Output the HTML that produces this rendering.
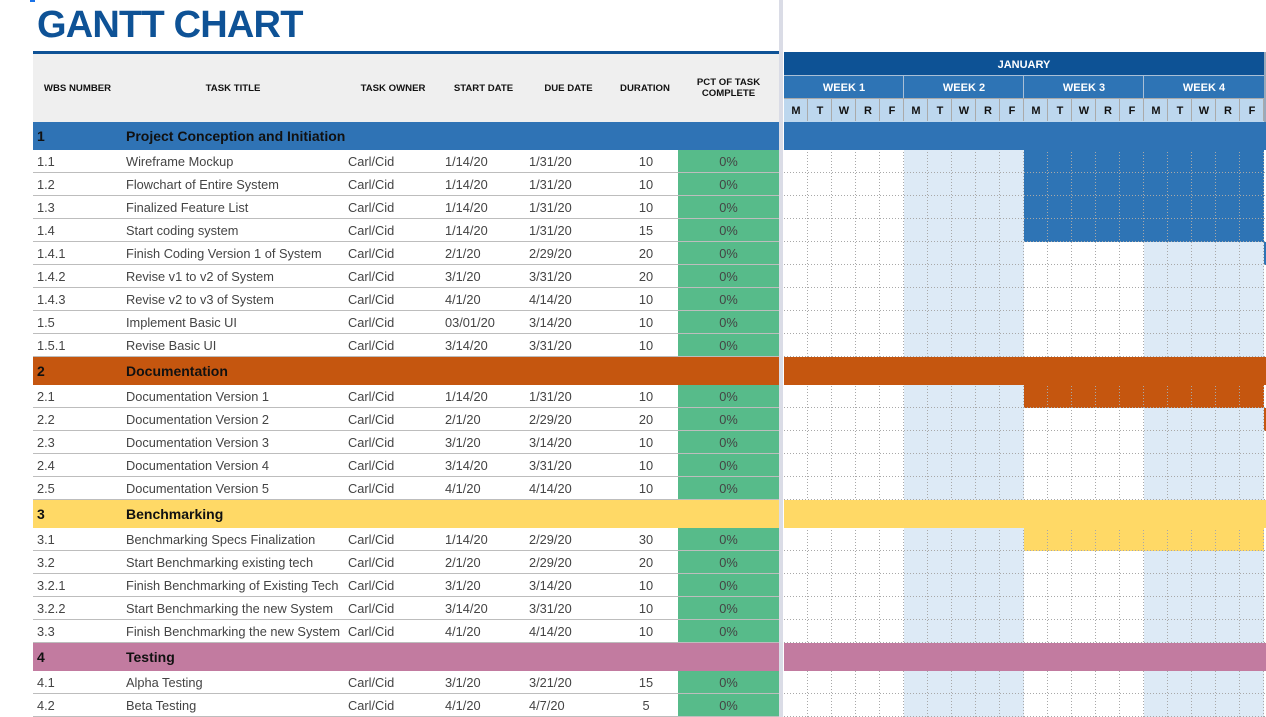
<!DOCTYPE html>
<html><head><meta charset="utf-8"><style>
*{margin:0;padding:0;box-sizing:border-box}
body{width:1266px;height:717px;overflow:hidden;background:#fff;font-family:"Liberation Sans",Arial,sans-serif;position:relative}
.title{position:absolute;left:37px;top:4px;font-size:38px;font-weight:bold;color:#0e5296;letter-spacing:-0.8px}
.mark{position:absolute;left:30px;top:0;width:5px;height:2px;background:#1a73e8}
.sep{position:absolute;left:779px;top:0;width:4px;height:717px;background:#dadce6}
.blueline{position:absolute;left:33px;top:51px;width:746px;height:3px;background:#0e5296}
.hdr{position:absolute;left:33px;top:54px;width:746px;height:68px;background:#efefef;display:flex;align-items:center;font-size:9.6px;font-weight:bold;color:#111}
.c{flex:none;text-align:center}
.w1{width:89px}.w2{width:222px}.w3{width:98px}.w4{width:83px}.w5{width:87px}.w6{width:66px}.w7{width:101px}
.rows{position:absolute;left:33px;top:122px;width:746px}
.r{display:flex;height:23px;border-bottom:1px solid #bdbdbd;font-size:12.8px;color:#444;align-items:center}
.r div{flex:none;white-space:nowrap}
.r .a{width:93px;padding-left:4px}
.r .b{width:222px}
.r .o{width:97px}
.r .s{width:84px}
.r .d{width:85px}
.r .du{width:64px;text-align:center;padding-left:0}
.r .p{width:101px;height:22px;line-height:23px;text-align:center;background:#57bb8a;margin-left:0}
.sec{display:flex;height:28px;align-items:center;font-size:14px;font-weight:bold;color:#111}
.sec .a{width:93px;padding-left:4px}
</style></head><body>
<div class="mark"></div>
<div class="title">GANTT CHART</div>
<div class="blueline"></div>
<div class="sep"></div>
<div class="hdr">
<div class="c w1">WBS NUMBER</div><div class="c w2">TASK TITLE</div><div class="c w3">TASK OWNER</div><div class="c w4">START DATE</div><div class="c w5">DUE DATE</div><div class="c w6">DURATION</div><div class="c w7">PCT OF TASK<br>COMPLETE</div>
</div>
<div class="rows">
<div class="sec" style="background:#2f73b5"><div class="a">1</div><div>Project Conception and Initiation</div></div>
<div class="r"><div class="a">1.1</div><div class="b">Wireframe Mockup</div><div class="o">Carl/Cid</div><div class="s">1/14/20</div><div class="d">1/31/20</div><div class="du">10</div><div class="p">0%</div></div>
<div class="r"><div class="a">1.2</div><div class="b">Flowchart of Entire System</div><div class="o">Carl/Cid</div><div class="s">1/14/20</div><div class="d">1/31/20</div><div class="du">10</div><div class="p">0%</div></div>
<div class="r"><div class="a">1.3</div><div class="b">Finalized Feature List</div><div class="o">Carl/Cid</div><div class="s">1/14/20</div><div class="d">1/31/20</div><div class="du">10</div><div class="p">0%</div></div>
<div class="r"><div class="a">1.4</div><div class="b">Start coding system</div><div class="o">Carl/Cid</div><div class="s">1/14/20</div><div class="d">1/31/20</div><div class="du">15</div><div class="p">0%</div></div>
<div class="r"><div class="a">1.4.1</div><div class="b">Finish Coding Version 1 of System</div><div class="o">Carl/Cid</div><div class="s">2/1/20</div><div class="d">2/29/20</div><div class="du">20</div><div class="p">0%</div></div>
<div class="r"><div class="a">1.4.2</div><div class="b">Revise v1 to v2 of System</div><div class="o">Carl/Cid</div><div class="s">3/1/20</div><div class="d">3/31/20</div><div class="du">20</div><div class="p">0%</div></div>
<div class="r"><div class="a">1.4.3</div><div class="b">Revise v2 to v3 of System</div><div class="o">Carl/Cid</div><div class="s">4/1/20</div><div class="d">4/14/20</div><div class="du">10</div><div class="p">0%</div></div>
<div class="r"><div class="a">1.5</div><div class="b">Implement Basic UI</div><div class="o">Carl/Cid</div><div class="s">03/01/20</div><div class="d">3/14/20</div><div class="du">10</div><div class="p">0%</div></div>
<div class="r"><div class="a">1.5.1</div><div class="b">Revise Basic UI</div><div class="o">Carl/Cid</div><div class="s">3/14/20</div><div class="d">3/31/20</div><div class="du">10</div><div class="p">0%</div></div>
<div class="sec" style="background:#c5560f"><div class="a">2</div><div>Documentation</div></div>
<div class="r"><div class="a">2.1</div><div class="b">Documentation Version 1</div><div class="o">Carl/Cid</div><div class="s">1/14/20</div><div class="d">1/31/20</div><div class="du">10</div><div class="p">0%</div></div>
<div class="r"><div class="a">2.2</div><div class="b">Documentation Version 2</div><div class="o">Carl/Cid</div><div class="s">2/1/20</div><div class="d">2/29/20</div><div class="du">20</div><div class="p">0%</div></div>
<div class="r"><div class="a">2.3</div><div class="b">Documentation Version 3</div><div class="o">Carl/Cid</div><div class="s">3/1/20</div><div class="d">3/14/20</div><div class="du">10</div><div class="p">0%</div></div>
<div class="r"><div class="a">2.4</div><div class="b">Documentation Version 4</div><div class="o">Carl/Cid</div><div class="s">3/14/20</div><div class="d">3/31/20</div><div class="du">10</div><div class="p">0%</div></div>
<div class="r"><div class="a">2.5</div><div class="b">Documentation Version 5</div><div class="o">Carl/Cid</div><div class="s">4/1/20</div><div class="d">4/14/20</div><div class="du">10</div><div class="p">0%</div></div>
<div class="sec" style="background:#ffd966"><div class="a">3</div><div>Benchmarking</div></div>
<div class="r"><div class="a">3.1</div><div class="b">Benchmarking Specs Finalization</div><div class="o">Carl/Cid</div><div class="s">1/14/20</div><div class="d">2/29/20</div><div class="du">30</div><div class="p">0%</div></div>
<div class="r"><div class="a">3.2</div><div class="b">Start Benchmarking existing tech</div><div class="o">Carl/Cid</div><div class="s">2/1/20</div><div class="d">2/29/20</div><div class="du">20</div><div class="p">0%</div></div>
<div class="r"><div class="a">3.2.1</div><div class="b">Finish Benchmarking of Existing Tech</div><div class="o">Carl/Cid</div><div class="s">3/1/20</div><div class="d">3/14/20</div><div class="du">10</div><div class="p">0%</div></div>
<div class="r"><div class="a">3.2.2</div><div class="b">Start Benchmarking the new System</div><div class="o">Carl/Cid</div><div class="s">3/14/20</div><div class="d">3/31/20</div><div class="du">10</div><div class="p">0%</div></div>
<div class="r"><div class="a">3.3</div><div class="b">Finish Benchmarking the new System</div><div class="o">Carl/Cid</div><div class="s">4/1/20</div><div class="d">4/14/20</div><div class="du">10</div><div class="p">0%</div></div>
<div class="sec" style="background:#c27ba0"><div class="a">4</div><div>Testing</div></div>
<div class="r"><div class="a">4.1</div><div class="b">Alpha Testing</div><div class="o">Carl/Cid</div><div class="s">3/1/20</div><div class="d">3/21/20</div><div class="du">15</div><div class="p">0%</div></div>
<div class="r"><div class="a">4.2</div><div class="b">Beta Testing</div><div class="o">Carl/Cid</div><div class="s">4/1/20</div><div class="d">4/7/20</div><div class="du">5</div><div class="p">0%</div></div>
</div>

<svg style="position:absolute;left:0;top:0" width="1266" height="717" font-family="Liberation Sans, Arial, sans-serif" font-weight="bold">
<rect x="784" y="52" width="480" height="23" fill="#0d5295"/>
<rect x="1264" y="52" width="2" height="70" fill="#9ab"/>
<text x="1024" y="68" fill="#fff" font-size="11" text-anchor="middle">JANUARY</text>
<rect x="784" y="75" width="480" height="23" fill="#2e74b5"/>
<g stroke="#a9bfd6" stroke-width="1">
<line x1="784" y1="75.5" x2="1264" y2="75.5"/>
<line x1="903.5" y1="75" x2="903.5" y2="98"/><line x1="1023.5" y1="75" x2="1023.5" y2="98"/><line x1="1143.5" y1="75" x2="1143.5" y2="98"/>
</g>
<g fill="#fff" font-size="11" text-anchor="middle">
<text x="844" y="91">WEEK 1</text><text x="964" y="91">WEEK 2</text><text x="1084" y="91">WEEK 3</text><text x="1204" y="91">WEEK 4</text>
</g>
<rect x="784" y="98" width="480" height="24" fill="#bdd7ee"/>
<line x1="784" y1="98.5" x2="1264" y2="98.5" stroke="#aaa"/>
<g stroke="#aaa">
<line x1="807.5" y1="98" x2="807.5" y2="121"/><line x1="831.5" y1="98" x2="831.5" y2="121"/><line x1="855.5" y1="98" x2="855.5" y2="121"/><line x1="879.5" y1="98" x2="879.5" y2="121"/><line x1="903.5" y1="98" x2="903.5" y2="121"/>
<line x1="927.5" y1="98" x2="927.5" y2="121"/><line x1="951.5" y1="98" x2="951.5" y2="121"/><line x1="975.5" y1="98" x2="975.5" y2="121"/><line x1="999.5" y1="98" x2="999.5" y2="121"/><line x1="1023.5" y1="98" x2="1023.5" y2="121"/>
<line x1="1047.5" y1="98" x2="1047.5" y2="121"/><line x1="1071.5" y1="98" x2="1071.5" y2="121"/><line x1="1095.5" y1="98" x2="1095.5" y2="121"/><line x1="1119.5" y1="98" x2="1119.5" y2="121"/><line x1="1143.5" y1="98" x2="1143.5" y2="121"/>
<line x1="1167.5" y1="98" x2="1167.5" y2="121"/><line x1="1191.5" y1="98" x2="1191.5" y2="121"/><line x1="1215.5" y1="98" x2="1215.5" y2="121"/><line x1="1239.5" y1="98" x2="1239.5" y2="121"/><line x1="1263.5" y1="98" x2="1263.5" y2="121"/>
</g>
<g fill="#111" font-size="11" text-anchor="middle">
<text x="796" y="114">M</text><text x="820" y="114">T</text><text x="844" y="114">W</text><text x="868" y="114">R</text><text x="892" y="114">F</text>
<text x="916" y="114">M</text><text x="940" y="114">T</text><text x="964" y="114">W</text><text x="988" y="114">R</text><text x="1012" y="114">F</text>
<text x="1036" y="114">M</text><text x="1060" y="114">T</text><text x="1084" y="114">W</text><text x="1108" y="114">R</text><text x="1132" y="114">F</text>
<text x="1156" y="114">M</text><text x="1180" y="114">T</text><text x="1204" y="114">W</text><text x="1228" y="114">R</text><text x="1252" y="114">F</text>
</g>
<rect x="904" y="122" width="120" height="595" fill="#ddeaf6"/>
<rect x="1144" y="122" width="120" height="595" fill="#ddeaf6"/>
<rect x="1024" y="150" width="240" height="92" fill="#2e74b5"/>
<rect x="1264" y="242" width="2" height="23" fill="#2e74b5"/>
<rect x="1024" y="385" width="240" height="23" fill="#c5560f"/>
<rect x="1264" y="408" width="2" height="23" fill="#c5560f"/>
<rect x="1024" y="528" width="240" height="23" fill="#ffd966"/>
<g stroke="#a8a8a8" stroke-dasharray="1,2" stroke-width="1">
<line x1="807.5" y1="122" x2="807.5" y2="717"/><line x1="831.5" y1="122" x2="831.5" y2="717"/><line x1="855.5" y1="122" x2="855.5" y2="717"/><line x1="879.5" y1="122" x2="879.5" y2="717"/><line x1="903.5" y1="122" x2="903.5" y2="717"/>
<line x1="927.5" y1="122" x2="927.5" y2="717"/><line x1="951.5" y1="122" x2="951.5" y2="717"/><line x1="975.5" y1="122" x2="975.5" y2="717"/><line x1="999.5" y1="122" x2="999.5" y2="717"/><line x1="1023.5" y1="122" x2="1023.5" y2="717"/>
<line x1="1047.5" y1="122" x2="1047.5" y2="717"/><line x1="1071.5" y1="122" x2="1071.5" y2="717"/><line x1="1095.5" y1="122" x2="1095.5" y2="717"/><line x1="1119.5" y1="122" x2="1119.5" y2="717"/><line x1="1143.5" y1="122" x2="1143.5" y2="717"/>
<line x1="1167.5" y1="122" x2="1167.5" y2="717"/><line x1="1191.5" y1="122" x2="1191.5" y2="717"/><line x1="1215.5" y1="122" x2="1215.5" y2="717"/><line x1="1239.5" y1="122" x2="1239.5" y2="717"/><line x1="1263.5" y1="122" x2="1263.5" y2="717"/>
<line x1="784" y1="172.5" x2="1266" y2="172.5"/><line x1="784" y1="195.5" x2="1266" y2="195.5"/><line x1="784" y1="218.5" x2="1266" y2="218.5"/><line x1="784" y1="241.5" x2="1266" y2="241.5"/><line x1="784" y1="264.5" x2="1266" y2="264.5"/><line x1="784" y1="287.5" x2="1266" y2="287.5"/><line x1="784" y1="310.5" x2="1266" y2="310.5"/><line x1="784" y1="333.5" x2="1266" y2="333.5"/><line x1="784" y1="356.5" x2="1266" y2="356.5"/>
<line x1="784" y1="407.5" x2="1266" y2="407.5"/><line x1="784" y1="430.5" x2="1266" y2="430.5"/><line x1="784" y1="453.5" x2="1266" y2="453.5"/><line x1="784" y1="476.5" x2="1266" y2="476.5"/><line x1="784" y1="499.5" x2="1266" y2="499.5"/>
<line x1="784" y1="550.5" x2="1266" y2="550.5"/><line x1="784" y1="573.5" x2="1266" y2="573.5"/><line x1="784" y1="596.5" x2="1266" y2="596.5"/><line x1="784" y1="619.5" x2="1266" y2="619.5"/><line x1="784" y1="642.5" x2="1266" y2="642.5"/>
<line x1="784" y1="693.5" x2="1266" y2="693.5"/><line x1="784" y1="716.5" x2="1266" y2="716.5"/>
</g>
<rect x="784" y="122" width="482" height="28" fill="#2f73b5"/>
<rect x="784" y="357" width="482" height="28" fill="#c5560f"/>
<rect x="784" y="500" width="482" height="28" fill="#ffd966"/>
<rect x="784" y="643" width="482" height="28" fill="#c27ba0"/>
</svg>
</body></html>
